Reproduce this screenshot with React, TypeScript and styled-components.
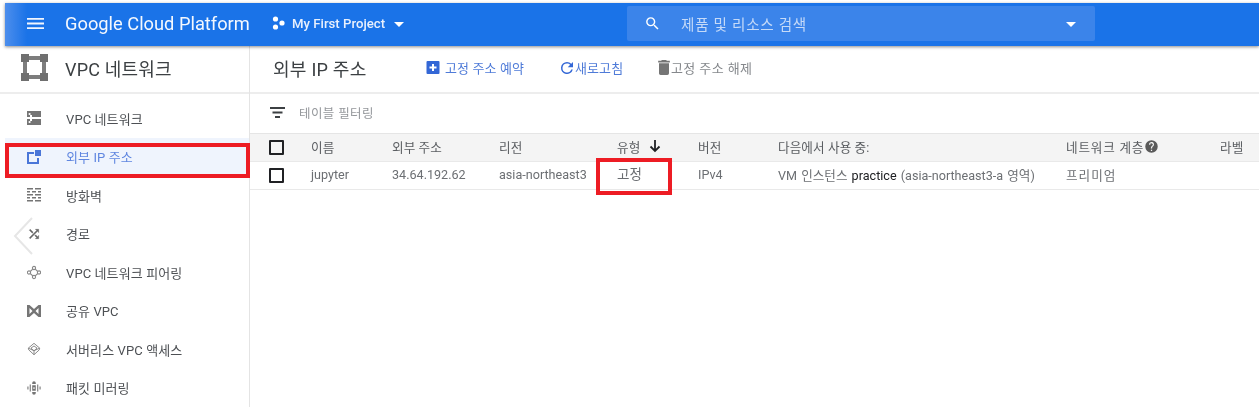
import React from "react";
import styled, { createGlobalStyle } from "styled-components";

const Global = createGlobalStyle`
  html, body { margin: 0; padding: 0; background: #fff; }
  body { font-family: Roboto, "Noto Sans CJK KR", sans-serif; overflow: hidden; }
`;

const Page = styled.div`
  position: relative;
  width: 1259px;
  height: 407px;
  overflow: hidden;
  padding-top: 3px;
  box-sizing: border-box;
  color: #5f6368;
  filter: blur(0.35px);
`;

const Header = styled.header`
  height: 43px;
  margin-left: 5px;
  padding-bottom: 3px;
  box-sizing: border-box;
  background: linear-gradient(90deg, #4d8eec 0, #1a73e8 22px);
  display: flex;
  align-items: center;
  color: #fff;
  box-shadow: 0 1px 3px rgba(0, 0, 0, 0.45);
  position: relative;
  z-index: 2;
`;

const MenuButton = styled.div`
  width: 60px;
  display: flex;
  justify-content: center;
`;

const Brand = styled.div`
  font-size: 18.3px;
  width: 207px;
  color: #f4f8fe;
  white-space: nowrap;
`;

const ProjectPicker = styled.div`
  width: 355px;
  display: flex;
  align-items: center;
  gap: 6px;
  font-size: 13.2px;
  font-weight: 500;
  color: #e8f0fd;
`;

const Caret = styled.span`
  width: 0;
  height: 0;
  border-left: 5.5px solid transparent;
  border-right: 5.5px solid transparent;
  border-top: 5.5px solid #fff;
  margin-left: 3px;
  margin-top: 2px;
`;

const SearchBox = styled.div`
  width: 468px;
  height: 35px;
  background: #3b84ea;
  border-radius: 2px;
  display: flex;
  align-items: center;
  padding: 0 19px 0 17px;
  box-sizing: border-box;
`;

const SearchText = styled.span`
  flex: 1;
  margin-left: 20px;
  font-size: 14.6px;
  letter-spacing: 0.7px;
  color: #c5daf8;
`;

const Body = styled.div`
  display: grid;
  grid-template-columns: 250px 1fr;
  height: 361px;
`;

const Sidebar = styled.aside`
  border-right: 1px solid #e4e4e4;
  box-sizing: border-box;
`;

const SideHead = styled.div`
  height: 48px;
  border-bottom: 2px solid #ededed;
  box-sizing: border-box;
  display: flex;
  align-items: center;
  padding: 0 0 3px 21px;
  gap: 17px;
  font-size: 18px;
  letter-spacing: 0.2px;
  color: #3c4043;
`;

const NavList = styled.nav`
  display: flex;
  flex-direction: column;
  padding-top: 5px;
`;

const NavItem = styled.div<{ $active?: boolean }>`
  height: 38.5px;
  display: flex;
  align-items: center;
  margin-left: ${(p) => (p.$active ? "5px" : "0")};
  padding-left: ${(p) => (p.$active ? "22px" : "27px")};
  background: ${(p) => (p.$active ? "#eff4fd" : "transparent")};
  color: ${(p) => (p.$active ? "#5f86e0" : "#4d5054")};
  font-size: 13px;
  letter-spacing: 0.1px;
  white-space: nowrap;
`;

const NavIcon = styled.span`
  width: 14px;
  height: 18px;
  margin-right: 25px;
  display: flex;
  align-items: center;
  justify-content: center;
  flex: none;
`;

const Main = styled.main`
  min-width: 0;
`;

const TitleBar = styled.div`
  height: 48px;
  border-bottom: 2px solid #ededed;
  display: flex;
  align-items: center;
  padding: 0 0 3px 23px;
  box-sizing: border-box;
`;

const Title = styled.h1`
  margin: 0;
  width: 153px;
  font-size: 18.1px;
  font-weight: 400;
  color: #3c4043;
  letter-spacing: 0.2px;
`;

const Action = styled.div<{ $disabled?: boolean; $w: number }>`
  width: ${(p) => p.$w}px;
  display: flex;
  align-items: center;
  gap: ${(p) => (p.$disabled ? "0" : "4px")};
  font-size: 13px;
  letter-spacing: ${(p) => (p.$disabled ? "0.4px" : "0.1px")};
  white-space: nowrap;
  color: ${(p) => (p.$disabled ? "#85888c" : "#4f7bd8")};
`;

const FilterBar = styled.div`
  height: 39px;
  padding: 0 0 2px 20px;
  box-sizing: border-box;
  display: flex;
  align-items: center;
  gap: 14px;
  font-size: 12.5px;
  letter-spacing: 0.4px;
  color: #94979b;
`;

const Row = styled.div<{ $head?: boolean }>`
  display: grid;
  grid-template-columns: 41px 81px 107px 118px 81px 80px 288px 154px 1fr;
  align-items: center;
  padding-left: 19px;
  height: 27px;
  box-sizing: content-box;
  font-size: 12.6px;
  letter-spacing: ${(p) => (p.$head ? "0.1px" : "0")};
  word-spacing: ${(p) => (p.$head ? "0" : "1px")};
  white-space: nowrap;
  color: ${(p) => (p.$head ? "#5a5d61" : "#6c6f73")};
  background: ${(p) => (p.$head ? "#f4f4f4" : "#fff")};
  border-top: ${(p) => (p.$head ? "1px solid #e5e5e5" : "0")};
  border-bottom: 1px solid #e9e9e9;
`;

const Text = styled.span<{ $spaced?: boolean }>`
  display: block;
  margin: 0 0 3px 1px;
  letter-spacing: ${(p) => (p.$spaced ? "1px" : "inherit")};
`;

const Check = styled.span`
  display: block;
  width: 11px;
  height: 11px;
  border: 2px solid #202124;
  border-radius: 1px;
`;

const SortCell = styled.span`
  display: flex;
  align-items: center;
  gap: 8px;
  margin: 0 0 3px 1px;
`;

const HelpCell = styled.span`
  display: flex;
  align-items: center;
  margin: 0 0 3px 1px;
  letter-spacing: 0.8px;
`;

const TypeCell = styled.span`
  font-size: 13.5px;
  color: #6a6d71;
  margin: 0 0 5px 1px;
`;

const Dark = styled.span`
  color: #202124;
`;

const Highlight = styled.div<{ $x: number; $y: number; $w: number; $h: number }>`
  position: absolute;
  left: ${(p) => p.$x}px;
  top: ${(p) => p.$y}px;
  width: ${(p) => p.$w}px;
  height: ${(p) => p.$h}px;
  box-sizing: border-box;
  border: 4px solid #ed1c24;
  z-index: 3;
`;

const Collapse = styled.svg`
  position: absolute;
  left: 13px;
  top: 217px;
  z-index: 3;
`;

const g = "#757575";

const icons: Record<string, React.ReactNode> = {
  vpc: (
    <svg width="14" height="14" viewBox="0 0 14 14" fill={g}>
      <path d="M0 0h14v6H5V4H3v2H0zM0 8h3v2h2V8h9v6H0z" />
      <circle cx="2.600" cy="3" r="1.100" fill="#fff" />
      <circle cx="2.600" cy="11" r="1.100" fill="#fff" />
    </svg>
  ),
  ip: (
    <svg width="14" height="14" viewBox="0 0 14 14" fill="#4a76d8">
      <path d="M0 2h7v2H2v8h8V8h2v6H0z" />
      <path d="M8 0h6v6H8z" />
    </svg>
  ),
  fw: (
    <svg width="14" height="14" viewBox="0 0 14 14" fill={g}>
      <path d="M0 0h6v1.500H0zM8 0h6v1.500H8zM0 3h3v1.500H0zM5 3h4v1.500H5zM11 3h3v1.500h-3zM0 6h6v1.500H0zM8 6h6v1.500H8zM0 9h3v1.500H0zM5 9h4v1.500H5zM11 9h3v1.500h-3zM0 12h6v1.500H0zM8 12h6v1.500H8z" />
    </svg>
  ),
  route: (
    <svg width="20" height="20" viewBox="0 0 24 24" fill="#666" stroke="#666" strokeWidth="0.8">
      <path d="M10.590 9.170 5.410 4 4 5.410l5.170 5.170 1.420-1.410zM14.500 4l2.040 2.040L4 18.590 5.410 20 17.960 7.460 20 9.500V4h-5.500zm.33 9.410-1.410 1.410 3.130 3.130L14.500 20H20v-5.500l-2.040 2.040-3.130-3.130z" />
    </svg>
  ),
  peer: (
    <svg width="15" height="15" viewBox="0 0 14 14" fill="none" stroke="#888" strokeWidth="1.100">
      <circle cx="7" cy="2.500" r="1.600" />
      <circle cx="7" cy="11.500" r="1.600" />
      <circle cx="2" cy="7" r="1.600" />
      <circle cx="12" cy="7" r="1.600" />
      <path d="M5.800 3.600 3.200 6M8.200 3.600 10.800 6M3.200 8l2.600 2.400M10.800 8l-2.600 2.400" />
    </svg>
  ),
  shared: (
    <svg width="14" height="14" viewBox="0 0 14 14" fill={g}>
      <path d="M0 1h2.500L7 5l4.500-4H14v12h-2.500L7 9l-4.500 4H0zM2.500 4v6L5.500 7zM11.500 4l-3 3 3 3z" fillRule="evenodd" />
    </svg>
  ),
  access: (
    <svg width="18" height="18" viewBox="0 0 16 16" fill="none" stroke="#858585" strokeWidth="1.100">
      <path d="M8 1.500 14.500 7 14 9 8 14.500 2 9 1.500 7z" />
      <path d="M1.500 7 8 10l6.500-3M8 4.500 4.500 7 8 10l3.500-3zM8 10v4.500" />
    </svg>
  ),
  mirror: (
    <svg width="18" height="18" viewBox="0 0 18 18" fill={g}>
      <path d="M0.500 7h1.400v4H.5zM3.500 4.500h1.400v9H3.500zM13.100 4.500h1.400v9h-1.400zM16.100 7h1.400v4h-1.400z" />
      <path d="M6.700 2.500a2.300 2.300 0 0 1 4.600 0V4H6.700zM6.700 5.500h4.600v7H6.700zM6.700 14h4.600v1.500a2.300 2.300 0 0 1-4.600 0z" />
      <circle cx="9" cy="9" r="1.100" fill="#fff" />
    </svg>
  ),
};

const navItems = [
  { key: "vpc", label: "VPC 네트워크" },
  { key: "ip", label: "외부 IP 주소", active: true },
  { key: "fw", label: "방화벽" },
  { key: "route", label: "경로" },
  { key: "peer", label: "VPC 네트워크 피어링" },
  { key: "shared", label: "공유 VPC" },
  { key: "access", label: "서버리스 VPC 액세스" },
  { key: "mirror", label: "패킷 미러링" },
];

export default function App() {
  return (
    <Page>
      <Global />
      <Header>
        <MenuButton>
          <svg width="17" height="11" viewBox="0 0 17 11" fill="#f1f6fe">
            <path d="M0 0h17v1.800H0zM0 4.600h17v1.800H0zM0 9.200h17V11H0z" />
          </svg>
        </MenuButton>
        <Brand>Google Cloud Platform</Brand>
        <ProjectPicker>
          <svg width="14" height="14" viewBox="0 0 14 14" fill="#fff">
            <circle cx="3.500" cy="3" r="2.600" />
            <circle cx="3.500" cy="11" r="2.600" />
            <circle cx="10" cy="7" r="2.600" />
          </svg>
          My First Project
          <Caret />
        </ProjectPicker>
        <SearchBox>
          <svg width="17" height="17" viewBox="0 0 24 24" fill="#fff">
            <path d="M15.500 14h-.79l-.28-.27A6.470 6.470 0 0 0 16 9.500 6.500 6.500 0 1 0 9.500 16c1.610 0 3.090-.59 4.230-1.570l.27.28v.79l5 4.990L20.490 19l-4.990-5zm-6 0C7.010 14 5 11.990 5 9.500S7.010 5 9.500 5 14 7.010 14 9.500 11.990 14 9.500 14z" />
          </svg>
          <SearchText>제품 및 리소스 검색</SearchText>
          <Caret />
        </SearchBox>
      </Header>
      <Body>
        <Sidebar>
          <SideHead>
            <svg width="27" height="27" viewBox="0 0 27 27" fill="#6f6f6f">
              <path d="M0 0h8v8H0zM19 0h8v8h-8zM0 19h8v8H0zM19 19h8v8h-8z" />
              <path d="M8 2h11v4H8zM8 21h11v4H8zM2 8h4v11H2zM21 8h4v11h-4z" fill="#7d7d7d" />
            </svg>
            VPC 네트워크
          </SideHead>
          <NavList>
            {navItems.map((n) => (
              <NavItem key={n.key} $active={n.active}>
                <NavIcon>{icons[n.key]}</NavIcon>
                {n.label}
              </NavItem>
            ))}
          </NavList>
        </Sidebar>
        <Main>
          <TitleBar>
            <Title>외부 IP 주소</Title>
            <Action $w={132}>
              <svg width="15" height="15" viewBox="0 0 15 15">
                <rect x="0.500" y="1" width="13" height="13" rx="1" fill="#3367d6" />
                <path d="M6 4h2v2.500h2.500v2H8V11H6V8.500H3.500v-2H6z" fill="#fff" />
              </svg>
              고정 주소 예약
            </Action>
            <Action $w={99}>
              <svg width="18" height="18" viewBox="0 0 24 24" fill="#3367d6" style={{ marginRight: -5 }}>
                <path d="M17.650 6.350A7.960 7.960 0 0 0 12 4a8 8 0 1 0 7.730 10h-2.080A6 6 0 1 1 12 6c1.660 0 3.140.69 4.220 1.780L13 11h7V4l-2.350 2.350z" />
              </svg>
              새로고침
            </Action>
            <Action $disabled $w={110}>
              <svg width="14" height="15" viewBox="5 3 14 18" fill="#757575">
                <path d="M6 19c0 1.100.9 2 2 2h8a2 2 0 0 0 2-2V7H6v12zM19 4h-3.500l-1-1h-5l-1 1H5v2h14V4z" />
              </svg>
              고정 주소 해제
            </Action>
          </TitleBar>
          <FilterBar>
            <svg width="15" height="11" viewBox="0 0 15 11" fill="#3c4043">
              <path d="M0 0h15v2H0zM2.500 4.500h10v2h-10zM5 9h5v2H5z" />
            </svg>
            테이블 필터링
          </FilterBar>
          <Row $head>
            <Check />
            <Text>이름</Text>
            <Text>외부 주소</Text>
            <Text>리전</Text>
            <SortCell>
              유형
              <svg width="14" height="14" viewBox="0 0 14 14" fill="none" stroke="#202124" strokeWidth="1.800">
                <path d="M7 1v11M2.500 7.500 7 12l4.500-4.500" />
              </svg>
            </SortCell>
            <Text>버전</Text>
            <Text>다음에서 사용 중:</Text>
            <HelpCell>
              네트워크 계층
              <svg width="15" height="15" viewBox="0 0 24 24" fill="#5a5a5a">
                <path d="M12 2a10 10 0 1 0 0 20 10 10 0 0 0 0-20zm1 17h-2v-2h2v2zm2.070-7.750-.9.920C13.450 12.900 13 13.500 13 15h-2v-.5c0-1.100.45-2.100 1.170-2.830l1.240-1.260A2 2 0 1 0 10 9H8a4 4 0 1 1 7.070 2.250z" />
              </svg>
            </HelpCell>
            <Text>라벨</Text>
          </Row>
          <Row>
            <Check />
            <Text>jupyter</Text>
            <Text>34.64.192.62</Text>
            <Text>asia-northeast3</Text>
            <TypeCell>고정</TypeCell>
            <Text>IPv4</Text>
            <Text>
              VM 인스턴스 <Dark>practice</Dark> (asia-northeast3-a 영역)
            </Text>
            <Text $spaced>프리미엄</Text>
            <span />
          </Row>
        </Main>
      </Body>
      <Highlight $x={5} $y={143} $w={245} $h={35} />
      <Highlight $x={596} $y={158} $w={76} $h={37} />
      <Collapse width="20" height="38" viewBox="0 0 20 38" fill="none" stroke="#e6e6e6" strokeWidth="2">
        <path d="M19 1 2 19l17 18" />
      </Collapse>
    </Page>
  );
}
